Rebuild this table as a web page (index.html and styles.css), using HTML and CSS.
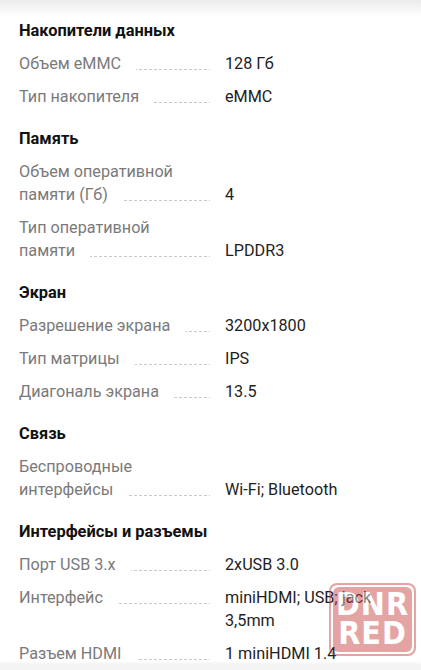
FILE: index.html
```html
<!DOCTYPE html>
<html lang="ru">
<head>
<meta charset="utf-8">
<title>Характеристики</title>
<link rel="stylesheet" href="styles.css">
</head>
<body>
<main class="specs">
  <section class="group">
    <h2 class="group-title">Накопители данных</h2>
    <div class="rows">
      <div class="label"><span>Объем eMMC</span></div><div class="value">128 Гб</div>
      <div class="label"><span>Тип накопителя</span></div><div class="value">eMMC</div>
    </div>
  </section>
  <section class="group">
    <h2 class="group-title">Память</h2>
    <div class="rows">
      <div class="label"><span>Объем оперативной памяти (Гб)</span></div><div class="value">4</div>
      <div class="label"><span>Тип оперативной памяти</span></div><div class="value">LPDDR3</div>
    </div>
  </section>
  <section class="group">
    <h2 class="group-title">Экран</h2>
    <div class="rows">
      <div class="label"><span>Разрешение экрана</span></div><div class="value">3200x1800</div>
      <div class="label"><span>Тип матрицы</span></div><div class="value">IPS</div>
      <div class="label"><span>Диагональ экрана</span></div><div class="value">13.5</div>
    </div>
  </section>
  <section class="group">
    <h2 class="group-title">Связь</h2>
    <div class="rows">
      <div class="label"><span>Беспроводные интерфейсы</span></div><div class="value">Wi-Fi; Bluetooth</div>
    </div>
  </section>
  <section class="group">
    <h2 class="group-title">Интерфейсы и разъемы</h2>
    <div class="rows">
      <div class="label"><span>Порт USB 3.x</span></div><div class="value">2xUSB 3.0</div>
      <div class="label"><span>Интерфейс</span></div><div class="value">miniHDMI; USB; jack 3,5mm</div>
      <div class="label"><span>Разъем HDMI</span></div><div class="value">1 miniHDMI 1.4</div>
    </div>
  </section>
</main>
<div class="bottom-bar"></div>
<div class="watermark">
  <div class="watermark-inner">DNR<br>RED</div>
</div>
</body>
</html>
```

FILE: styles.css
```css
html, body {
  margin: 0;
  padding: 0;
}
body {
  font-family: Roboto, "Noto Sans", sans-serif;
  background: linear-gradient(#ebebeb 0, #ffffff 16px) no-repeat, #ffffff;
  height: 670px;
  overflow: hidden;
  color: #222;
}
.specs {
  display: flex;
  flex-direction: column;
  gap: 19px;
  padding: 19px 19px 0 19px;
}
.group {
  display: flex;
  flex-direction: column;
  gap: 10px;
}
.group-title {
  margin: 0;
  font-size: 16.4px;
  font-weight: 700;
  line-height: 23px;
  color: #111;
}
.rows {
  display: grid;
  grid-template-columns: 191px 1fr;
  column-gap: 15px;
  row-gap: 10px;
  font-size: 16.2px;
  line-height: 23px;
}
.label {
  align-self: start;
  color: #7a7a7a;
  background-image: linear-gradient(to right, #cacaca 3px, transparent 3px);
  background-size: 5px 1px;
  background-repeat: repeat-x;
  background-position: left bottom 5px;
}
.label span {
  background: #fff;
  padding-right: 15px;
}
.value {
  align-self: end;
  color: #1e1e1e;
}
.bottom-bar {
  position: fixed;
  left: 0;
  right: 0;
  bottom: 0;
  height: 6px;
  background: #f4f4f4;
  box-shadow: 0 -1px 3px rgba(0,0,0,0.06);
}
.watermark {
  position: absolute;
  left: 329px;
  top: 583px;
  width: 79px;
  height: 65px;
  border: 2px solid #c73737;
  border-radius: 8px;
  padding: 2px;
  opacity: 0.45;
}
.watermark-inner {
  width: 100%;
  height: 100%;
  box-sizing: border-box;
  background: #c73737;
  border-radius: 6px;
  color: #fff;
  font-family: "Liberation Sans Narrow", "DejaVu Sans Condensed", sans-serif;
  font-weight: 700;
  font-size: 32px;
  line-height: 29px;
  letter-spacing: 1px;
  text-align: center;
  padding-top: 3px;
}
```
